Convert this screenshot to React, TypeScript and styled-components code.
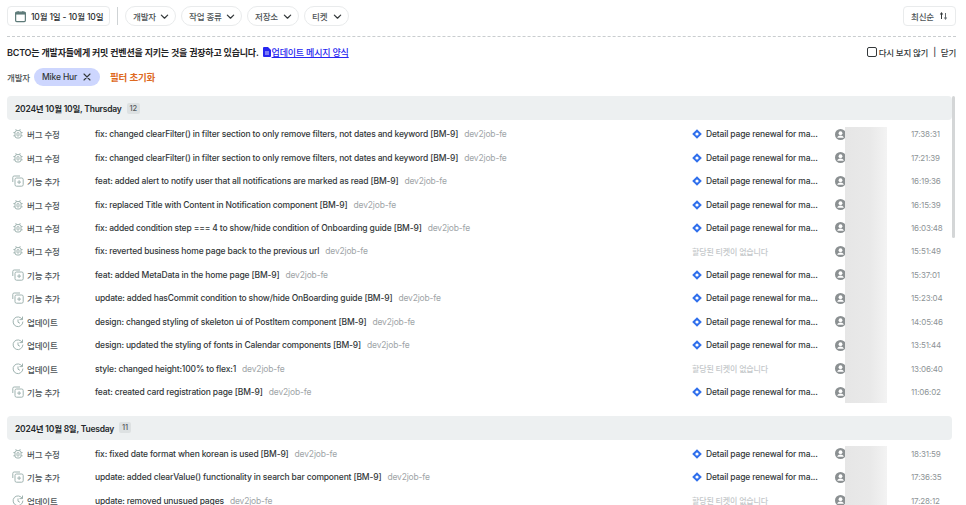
import React from 'react';
import styled, { createGlobalStyle } from 'styled-components';

const GlobalStyle = createGlobalStyle`
  html, body {
    margin: 0;
    height: 100%;
    overflow: hidden;
    background: #fff;
  }
  body {
    font-family: Inter, "Noto Sans CJK KR", "Noto Sans", sans-serif;
    color: #25292b;
    font-size: 8.5px;
    letter-spacing: -0.16px;
  }
  button {
    letter-spacing: inherit;
  }
`;

type Kind = 'bug' | 'feat' | 'update';

type Commit = {
  kind: Kind;
  message: string;
  ticket: boolean;
  time: string;
};

const kindLabels: Record<Kind, string> = {
  bug: '버그 수정',
  feat: '기능 추가',
  update: '업데이트',
};

const groups: { date: string; count: number; commits: Commit[] }[] = [
  {
    date: '2024년 10월 10일, Thursday',
    count: 12,
    commits: [
      { kind: 'bug', message: 'fix: changed clearFilter() in filter section to only remove filters, not dates and keyword [BM-9]', ticket: true, time: '17:38:31' },
      { kind: 'bug', message: 'fix: changed clearFilter() in filter section to only remove filters, not dates and keyword [BM-9]', ticket: true, time: '17:21:39' },
      { kind: 'feat', message: 'feat: added alert to notify user that all notifications are marked as read [BM-9]', ticket: true, time: '16:19:36' },
      { kind: 'bug', message: 'fix: replaced Title with Content in Notification component [BM-9]', ticket: true, time: '16:15:39' },
      { kind: 'bug', message: 'fix: added condition step === 4 to show/hide condition of Onboarding guide [BM-9]', ticket: true, time: '16:03:48' },
      { kind: 'bug', message: 'fix: reverted business home page back to the previous url', ticket: false, time: '15:51:49' },
      { kind: 'feat', message: 'feat: added MetaData in the home page [BM-9]', ticket: true, time: '15:37:01' },
      { kind: 'feat', message: 'update: added hasCommit condition to show/hide OnBoarding guide [BM-9]', ticket: true, time: '15:23:04' },
      { kind: 'update', message: 'design: changed styling of skeleton ui of PostItem component [BM-9]', ticket: true, time: '14:05:46' },
      { kind: 'update', message: 'design: updated the styling of fonts in Calendar components [BM-9]', ticket: true, time: '13:51:44' },
      { kind: 'update', message: 'style: changed height:100% to flex:1', ticket: false, time: '13:06:40' },
      { kind: 'feat', message: 'feat: created card registration page [BM-9]', ticket: true, time: '11:06:02' },
    ],
  },
  {
    date: '2024년 10월 8일, Tuesday',
    count: 11,
    commits: [
      { kind: 'bug', message: 'fix: fixed date format when korean is used [BM-9]', ticket: true, time: '18:31:59' },
      { kind: 'feat', message: 'update: added clearValue() functionality in search bar component [BM-9]', ticket: true, time: '17:36:35' },
      { kind: 'update', message: 'update: removed unusued pages', ticket: false, time: '17:28:12' },
    ],
  },
];

const Page = styled.div`
  position: relative;
  height: 505px;
  overflow: hidden;
  padding: 6px 10px 0 7px;
  box-sizing: border-box;
`;

const Toolbar = styled.div`
  display: flex;
  align-items: center;
  gap: 5px;
  height: 20px;
  padding-bottom: 10px;
  border-bottom: 1px dashed #c9cdcf;
`;

const DateButton = styled.button`
  display: flex;
  align-items: center;
  gap: 4px;
  width: 103px;
  height: 20px;
  padding: 0 0 0 6px;
  box-sizing: border-box;
  background: #fff;
  border: 1px solid #e9ebec;
  border-radius: 4px;
  font: 500 8.5px Inter, "Noto Sans CJK KR", sans-serif;
  color: #25292b;
  white-space: nowrap;
`;

const ToolbarDivider = styled.span`
  width: 1px;
  height: 18px;
  margin: 0 2px;
  background: #cfd3d5;
`;

const FilterChip = styled.button<{ $width: number }>`
  display: flex;
  align-items: center;
  justify-content: space-between;
  width: ${({ $width }) => $width}px;
  height: 20px;
  padding: 0 6px 0 7px;
  box-sizing: border-box;
  background: #fff;
  border: 1px solid #e9ebec;
  border-radius: 10px;
  font: 500 8.5px Inter, "Noto Sans CJK KR", sans-serif;
  color: #4d5356;
  white-space: nowrap;
`;

const SortButton = styled.button`
  display: flex;
  align-items: center;
  justify-content: space-between;
  width: 53px;
  height: 20px;
  margin-left: auto;
  padding: 0 7px;
  box-sizing: border-box;
  background: #fff;
  border: 1px solid #e9ebec;
  border-radius: 4px;
  font: 500 8.5px Inter, "Noto Sans CJK KR", sans-serif;
  color: #4d5356;
`;

const Notice = styled.div`
  display: flex;
  align-items: center;
  justify-content: space-between;
  height: 14px;
  margin-top: 8px;
  color: #1f2325;
`;

const NoticeText = styled.span`
  display: flex;
  align-items: center;
  gap: 4px;
  font-size: 9px;
  font-weight: 600;
  letter-spacing: -0.2px;
`;

const DocLink = styled.a`
  display: inline-flex;
  align-items: center;
  gap: 1px;
  color: #2727f0;
  font-weight: 500;
  text-decoration: underline;
`;

const NoticeActions = styled.span`
  display: flex;
  align-items: center;
  gap: 5px;
  font-weight: 500;
  letter-spacing: -0.25px;
  color: #33383a;
`;

const Checkbox = styled.span`
  width: 8px;
  height: 8px;
  margin-right: -3px;
  border: 1.2px solid #33383a;
  border-radius: 2px;
`;

const ActiveFilters = styled.div`
  display: flex;
  align-items: center;
  height: 18px;
  margin-top: 9px;
`;

const FilterName = styled.span`
  width: 27px;
  color: #4d5356;
  font-weight: 500;
`;

const ActiveChip = styled.span`
  display: flex;
  align-items: center;
  justify-content: space-between;
  width: 66px;
  height: 18px;
  padding: 0 9px 0 8px;
  box-sizing: border-box;
  background: #cdd6fe;
  border-radius: 9px;
  font-weight: 500;
  color: #33383a;
`;

const ResetFilters = styled.span`
  margin-left: 10px;
  font-size: 9.5px;
  font-weight: 600;
  color: #de6a1f;
`;

const Group = styled.section`
  margin-top: 10px;
  & + & {
    margin-top: 12px;
  }
`;

const GroupHeader = styled.header`
  display: flex;
  align-items: center;
  gap: 5px;
  width: 945px;
  height: 24px;
  margin-bottom: 2.5px;
  padding-left: 8px;
  box-sizing: border-box;
  background: #edf0f1;
  border-radius: 4px;
  font-weight: 600;
  letter-spacing: -0.22px;
  color: #25292b;
`;

const CountBadge = styled.span`
  padding: 1px 3px;
  background: #dde1e2;
  border-radius: 2px;
  font-size: 7.5px;
  font-weight: 500;
  color: #565c5f;
`;

const RowList = styled.div`
  position: relative;
`;

const Row = styled.div`
  display: grid;
  grid-template-columns: 88px 597px 143px 76px 40px;
  align-items: center;
  height: 23.45px;
`;

const KindCell = styled.span`
  display: flex;
  align-items: center;
  gap: 3px;
  padding-left: 5px;
  font-weight: 500;
  color: #4d5356;
  white-space: nowrap;
`;

const MessageCell = styled.span`
  font-weight: 500;
  color: #33383a;
  white-space: nowrap;
`;

const Repo = styled.span`
  margin-left: 6px;
  font-weight: 400;
  color: #9ea4a7;
`;

const TicketCell = styled.span`
  display: flex;
  align-items: center;
  gap: 4px;
  font-weight: 500;
  color: #33383a;
  white-space: nowrap;
`;

const NoTicket = styled.span`
  font-size: 8px;
  color: #c4c8ca;
`;

const AvatarCell = styled.span`
  display: flex;
  align-items: center;
`;

const TimeCell = styled.span`
  font-size: 8px;
  color: #8d9396;
  white-space: nowrap;
`;

// 작성자 이름을 가린 흐림 영역
const BlurPatch = styled.div`
  position: absolute;
  top: 4px;
  bottom: 1px;
  left: 838px;
  width: 42px;
  background: linear-gradient(90deg, #e6e6e6 0%, #e9e9e9 60%, #f3f3f3 100%);
`;

const ScrollThumb = styled.div`
  position: absolute;
  top: 96px;
  right: 11px;
  width: 3px;
  height: 142px;
  background: #d4d6d7;
  border-radius: 2px;
`;

const CalendarIcon = () => (
  <svg width="13" height="13" viewBox="0 0 12 12" fill="none">
    <rect x="1.5" y="2" width="9" height="8.8" rx="1" stroke="#5d7a78" strokeWidth="1.1" />
    <rect x="1.5" y="2" width="9" height="2.2" fill="#5d7a78" />
    <path d="M3.8 1v1.5M8.2 1v1.5" stroke="#5d7a78" strokeWidth="1" />
  </svg>
);

const ChevronIcon = () => (
  <svg width="9" height="9" viewBox="0 0 8 8" fill="none">
    <path d="M1.2 2.8 4 5.5l2.8-2.7" stroke="#33383a" strokeWidth="1.1" strokeLinecap="round" strokeLinejoin="round" />
  </svg>
);

const SortIcon = () => (
  <svg width="9" height="10" viewBox="0 0 9 10" fill="none">
    <path d="M2.5 8V2" stroke="#33383a" strokeWidth="1" />
    <path d="M.8 3.4 2.5 1l1.7 2.4z" fill="#33383a" />
    <path d="M6.5 2v6" stroke="#666c6f" strokeWidth="1" />
    <path d="M4.8 6.6 6.5 9l1.7-2.4z" fill="#666c6f" />
  </svg>
);

const DocIcon = () => (
  <svg width="8" height="10" viewBox="0 0 8 10">
    <path d="M1 0h4l3 3v6a1 1 0 0 1-1 1H1a1 1 0 0 1-1-1V1a1 1 0 0 1 1-1z" fill="#2727f0" />
    <path d="M2 5h4M2 7h4" stroke="#fff" strokeWidth=".8" />
  </svg>
);

const CloseIcon = () => (
  <svg width="8" height="8" viewBox="0 0 8 8" fill="none">
    <path d="m1 1 6 6M7 1 1 7" stroke="#33383a" strokeWidth="1.1" strokeLinecap="round" />
  </svg>
);

const KindIcon = ({ kind }: { kind: Kind }) => {
  const stroke = '#9fb3b0';
  if (kind === 'bug') {
    return (
      <svg width="12" height="12" viewBox="0 0 12 12" fill="none" stroke={stroke} strokeWidth="1">
        <rect x="3" y="2.6" width="6" height="7.4" rx="2" />
        <rect x="5" y="4.6" width="2" height="3.4" rx=".6" />
        <path d="M4.4 2.6 3.8 1.2M7.6 2.6l.6-1.4M3 4.6H1.4M9 4.6h1.6M3 7.8H1.4M9 7.8h1.6" />
      </svg>
    );
  }
  if (kind === 'feat') {
    return (
      <svg width="12" height="12" viewBox="0 0 12 12" fill="none" stroke={stroke} strokeWidth="1">
        <path d="M.8 7V2.4A1.4 1.4 0 0 1 2.2 1H8" />
        <rect x="3" y="3" width="8.2" height="8.2" rx="1.5" />
        <path d="M7.1 5.2v3.8M5.2 7.1H9" />
      </svg>
    );
  }
  return (
    <svg width="12" height="12" viewBox="0 0 12 12" fill="none" stroke={stroke} strokeWidth="1">
      <path d="M10.2 3.2A4.9 4.9 0 1 0 10.9 6" strokeLinecap="round" />
      <path d="M10.5 1v2.6H7.9" strokeLinecap="round" strokeLinejoin="round" />
      <path d="M6 3.8V6.2l1.6.9" strokeLinecap="round" strokeLinejoin="round" />
    </svg>
  );
};

const TicketIcon = () => (
  <svg width="10" height="10" viewBox="0 0 10 10">
    <path d="M5 .2 9.8 5 5 9.8.2 5z" fill="#2f6fec" />
    <circle cx="5" cy="5" r="1.6" fill="#fff" />
  </svg>
);

const AvatarIcon = () => (
  <svg width="11" height="11" viewBox="0 0 11 11">
    <circle cx="5.5" cy="5.5" r="5.5" fill="#8b9092" />
    <circle cx="5.5" cy="4.2" r="1.9" fill="#fff" />
    <path d="M2.2 8.8c.5-1.5 1.8-2.2 3.3-2.2s2.8.7 3.3 2.2z" fill="#fff" />
  </svg>
);

const App = () => {
  return (
    <Page>
      <GlobalStyle />
      <Toolbar>
        <DateButton>
          <CalendarIcon />
          10월 1일 - 10월 10일
        </DateButton>
        <ToolbarDivider />
        <FilterChip $width={51}>개발자 <ChevronIcon /></FilterChip>
        <FilterChip $width={61}>작업 종류 <ChevronIcon /></FilterChip>
        <FilterChip $width={52}>저장소 <ChevronIcon /></FilterChip>
        <FilterChip $width={45}>티켓 <ChevronIcon /></FilterChip>
        <SortButton>최신순 <SortIcon /></SortButton>
      </Toolbar>

      <Notice>
        <NoticeText>
          BCTO는 개발자들에게 커밋 컨벤션을 지키는 것을 권장하고 있습니다.
          <DocLink>
            <DocIcon />
            업데이트 메시지 양식
          </DocLink>
        </NoticeText>
        <NoticeActions>
          <Checkbox />
          다시 보지 않기
          <span>|</span>
          닫기
        </NoticeActions>
      </Notice>

      <ActiveFilters>
        <FilterName>개발자</FilterName>
        <ActiveChip>Mike Hur <CloseIcon /></ActiveChip>
        <ResetFilters>필터 초기화</ResetFilters>
      </ActiveFilters>

      {groups.map((group) => (
        <Group key={group.date}>
          <GroupHeader>
            {group.date}
            <CountBadge>{group.count}</CountBadge>
          </GroupHeader>
          <RowList>
            {group.commits.map((commit) => (
              <Row key={commit.time}>
                <KindCell>
                  <KindIcon kind={commit.kind} />
                  {kindLabels[commit.kind]}
                </KindCell>
                <MessageCell>
                  {commit.message}
                  <Repo>dev2job-fe</Repo>
                </MessageCell>
                <TicketCell>
                  {commit.ticket ? (
                    <>
                      <TicketIcon />
                      Detail page renewal for ma...
                    </>
                  ) : (
                    <NoTicket>할당된 티켓이 없습니다</NoTicket>
                  )}
                </TicketCell>
                <AvatarCell>
                  <AvatarIcon />
                </AvatarCell>
                <TimeCell>{commit.time}</TimeCell>
              </Row>
            ))}
            <BlurPatch />
          </RowList>
        </Group>
      ))}
      <ScrollThumb />
    </Page>
  );
};

export default App;
